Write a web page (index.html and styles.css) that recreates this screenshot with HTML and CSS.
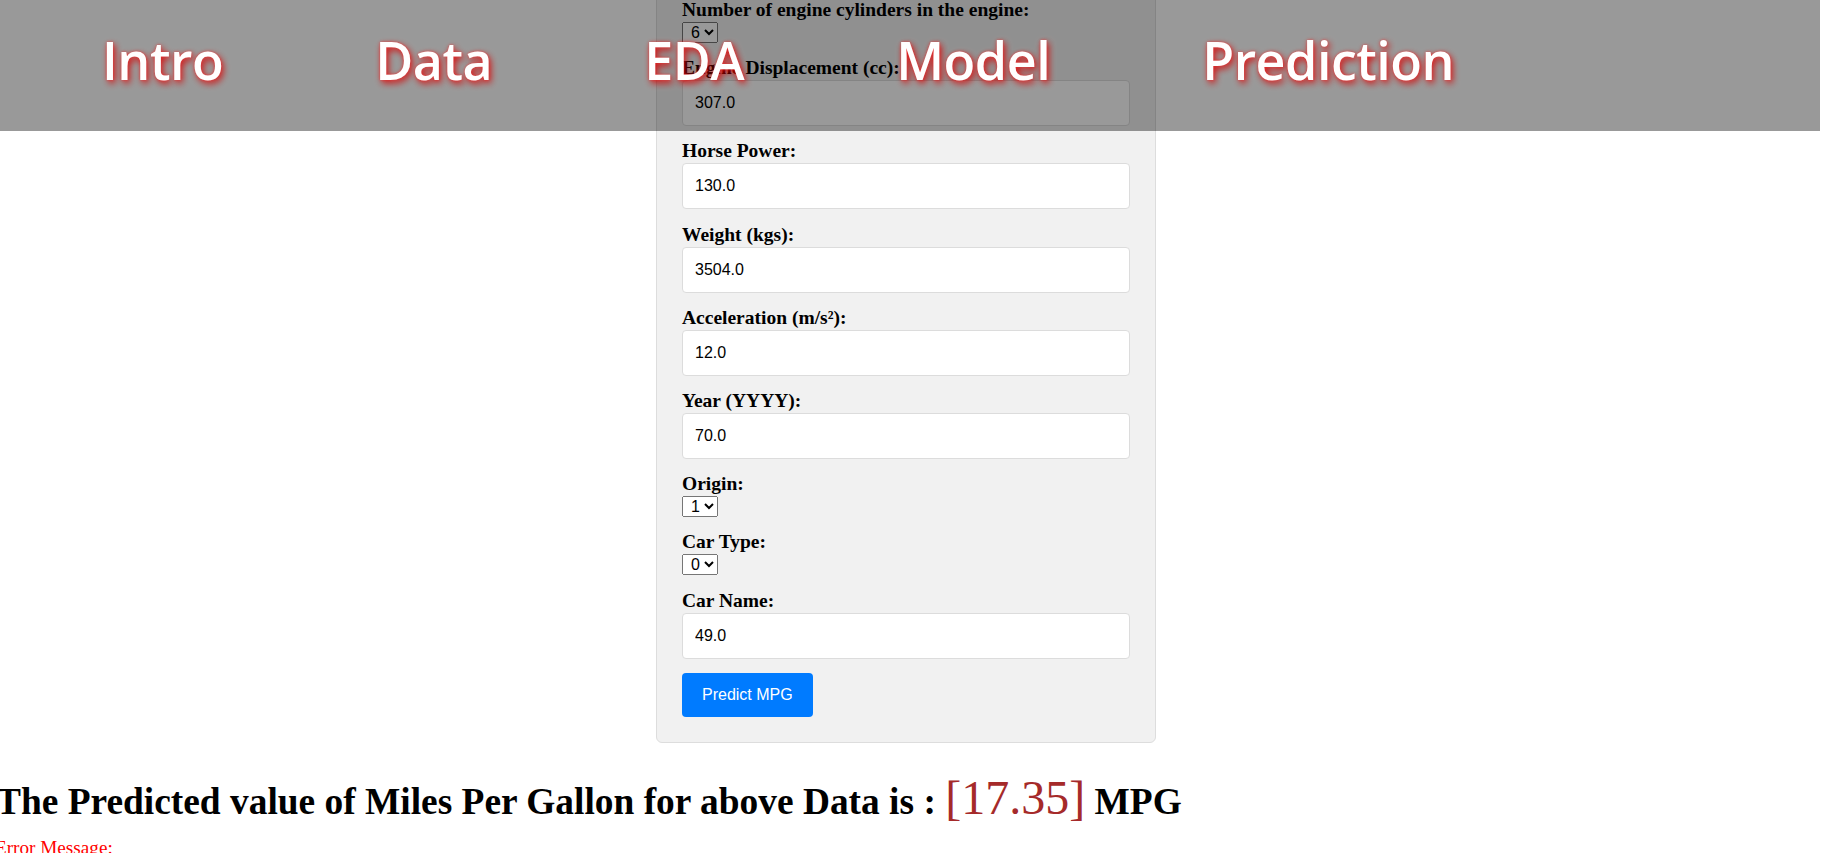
FILE: index.html
```html
<!DOCTYPE html>
<html lang="en">
<head>
<meta charset="utf-8">
<title>MPG Prediction</title>
<link rel="stylesheet" href="styles.css">
</head>
<body>
<nav class="topnav">
  <ul class="nav-list">
    <li class="nav-item"><a class="nav-link" href="#intro">Intro</a></li>
    <li class="nav-item"><a class="nav-link" href="#data">Data</a></li>
    <li class="nav-item"><a class="nav-link" href="#eda">EDA</a></li>
    <li class="nav-item"><a class="nav-link" href="#model">Model</a></li>
    <li class="nav-item"><a class="nav-link" href="#prediction">Prediction</a></li>
  </ul>
</nav>
<main class="page">
  <div class="form-wrap">
    <form class="card">
      <label class="field-label" for="cyl">Number of engine cylinders in the engine:</label>
      <select class="field-select" id="cyl"><option>6</option></select>

      <label class="field-label" for="disp">Engine Displacement (cc):</label>
      <input class="field-input" id="disp" type="text" value="307.0">

      <label class="field-label" for="hp">Horse Power:</label>
      <input class="field-input" id="hp" type="text" value="130.0">

      <label class="field-label" for="wt">Weight (kgs):</label>
      <input class="field-input" id="wt" type="text" value="3504.0">

      <label class="field-label" for="acc">Acceleration (m/s²):</label>
      <input class="field-input" id="acc" type="text" value="12.0">

      <label class="field-label" for="yr">Year (YYYY):</label>
      <input class="field-input" id="yr" type="text" value="70.0">

      <label class="field-label" for="org">Origin:</label>
      <select class="field-select" id="org"><option>1</option></select>

      <label class="field-label" for="ct">Car Type:</label>
      <select class="field-select" id="ct"><option>0</option></select>

      <label class="field-label" for="cn">Car Name:</label>
      <input class="field-input" id="cn" type="text" value="49.0">

      <button class="btn-predict" type="button">Predict MPG</button>
    </form>
  </div>
  <h1 class="result">The Predicted value of Miles Per Gallon for above Data is : <span class="result-value">[17.35]</span> MPG</h1>
  <p class="error">Error Message:</p>
</main>
</body>
</html>
```
FILE: styles.css
```css
html, body {
  margin: 0;
  padding: 0;
  overflow: hidden;
  background: #ffffff;
}

body {
  font-family: "Liberation Serif", "Times New Roman", serif;
  color: #000;
}

/* top overlay navigation */
.topnav {
  position: fixed;
  top: 0;
  left: 0;
  right: 2px;
  height: 131px;
  background: rgba(0, 0, 0, 0.4);
  z-index: 10;
}

.nav-list {
  list-style: none;
  margin: 0;
  padding: 0 0 12px 102px;
  box-sizing: border-box;
  height: 100%;
  display: flex;
  align-items: center;
  gap: 152px;
}

.nav-link {
  font-family: "Open Sans", "Noto Sans", sans-serif;
  font-weight: 600;
  font-size: 52px;
  line-height: 1;
  color: #ffffff;
  text-decoration: none;
  text-shadow: 0 0 3px rgba(255, 40, 40, 0.7), 2px 3px 7px rgba(215, 0, 0, 0.95);
  letter-spacing: -0.5px;
}

/* form card */
.page {
  display: block;
}

.form-wrap {
  display: flex;
  justify-content: center;
  padding-right: 10px;
  margin-top: -27px;
}

.card {
  width: 500px;
  box-sizing: border-box;
  background: #f1f1f1;
  border: 1px solid #dddddd;
  border-radius: 6px;
  padding: 25px;
  display: flex;
  flex-direction: column;
  align-items: flex-start;
}

.field-label {
  display: block;
  font-weight: 700;
  font-size: 19.5px;
  line-height: 22px;
  margin: 0 0 1px;
}

.field-input {
  display: block;
  width: 100%;
  height: 46px;
  box-sizing: border-box;
  margin: 0 0 14.2px;
  padding: 0 12px;
  border: 1px solid #dcdcdc;
  border-radius: 4px;
  background: #ffffff;
  font-family: "Liberation Sans", Arial, sans-serif;
  font-size: 16px;
  color: #000;
}

.field-select {
  display: block;
  height: 21px;
  margin: 0 0 14.2px;
  padding: 0 1px 0 4px;
  font-family: "Liberation Sans", Arial, sans-serif;
  font-size: 16px;
  color: #000;
}

.btn-predict {
  height: 44px;
  padding: 0 20px;
  border: none;
  border-radius: 4px;
  background: #007bff;
  color: #ffffff;
  font-family: "Liberation Sans", Arial, sans-serif;
  font-size: 16px;
}

/* result */
.result {
  margin: 27px 0 0 -4px;
  font-size: 37.4px;
  font-weight: 700;
  white-space: nowrap;
}

.result-value {
  color: #a52a2a;
  font-weight: 400;
  font-size: 48px;
}

.error {
  margin: 12px 0 0 -5px;
  color: #ff0000;
  font-size: 19.2px;
}
```
